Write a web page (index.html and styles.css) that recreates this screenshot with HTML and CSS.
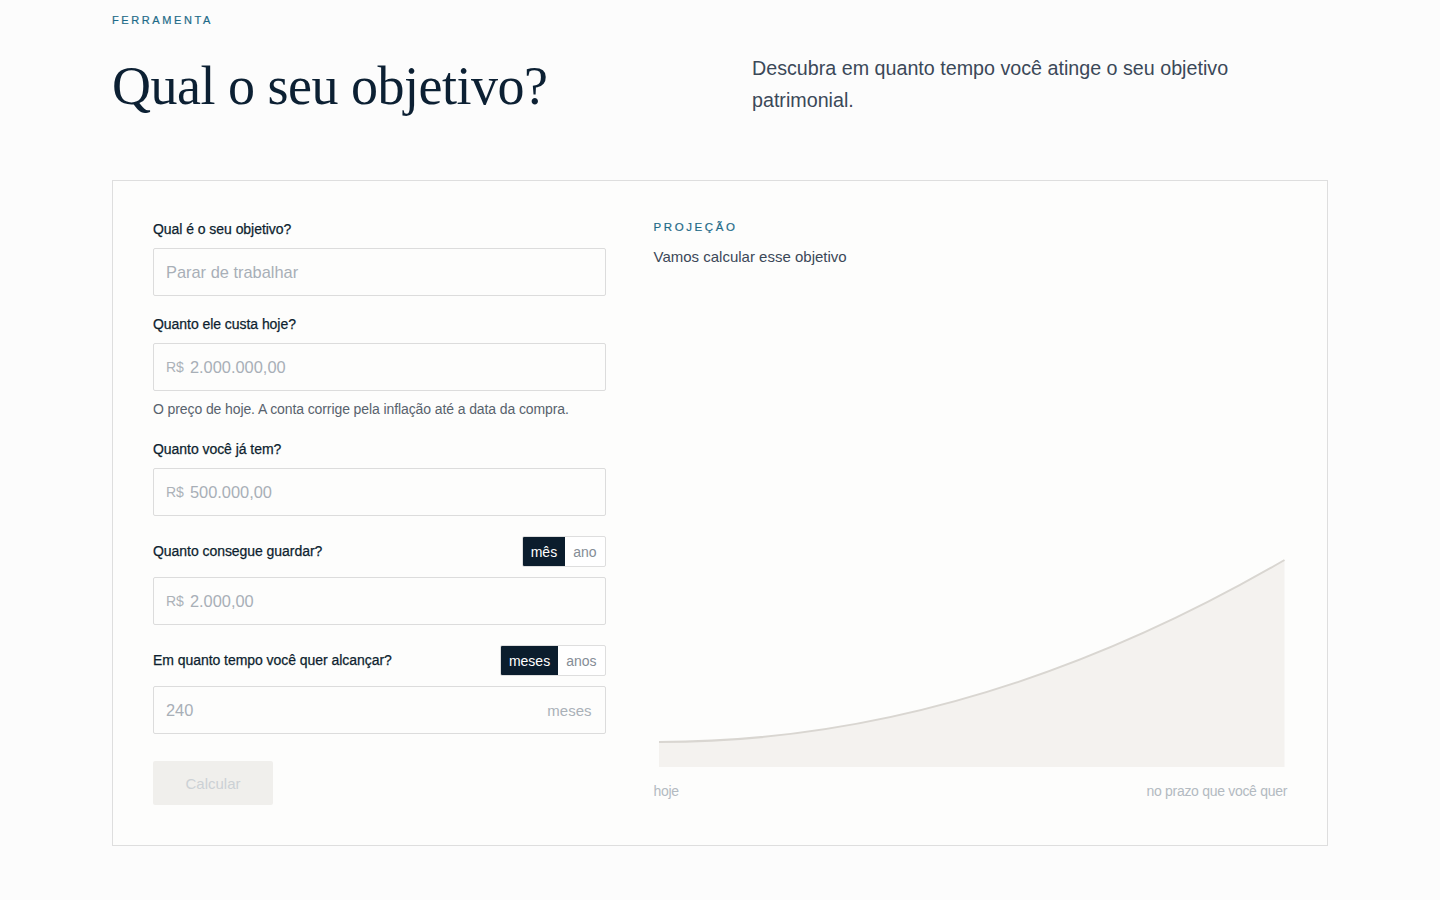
FILE: index.html
```html
<!DOCTYPE html>
<html lang="pt-BR">
<head>
<meta charset="utf-8">
<title>Qual o seu objetivo?</title>
<link rel="stylesheet" href="styles.css">
</head>
<body>
<main class="page">
  <header class="hero">
    <div class="hero-left">
      <div class="eyebrow">FERRAMENTA</div>
      <h1 class="title">Qual o seu objetivo?</h1>
    </div>
    <p class="lead">Descubra em quanto tempo você atinge o seu objetivo patrimonial.</p>
  </header>

  <section class="card">
    <form class="form">
      <div class="field">
        <div class="field-head"><label class="label">Qual é o seu objetivo?</label></div>
        <div class="input"><input class="control" type="text" placeholder="Parar de trabalhar"></div>
      </div>

      <div class="field">
        <div class="field-head"><label class="label">Quanto ele custa hoje?</label></div>
        <div class="input"><span class="prefix">R$</span><input class="control" type="text" placeholder="2.000.000,00"></div>
        <p class="help">O preço de hoje. A conta corrige pela inflação até a data da compra.</p>
      </div>

      <div class="field">
        <div class="field-head"><label class="label">Quanto você já tem?</label></div>
        <div class="input"><span class="prefix">R$</span><input class="control" type="text" placeholder="500.000,00"></div>
      </div>

      <div class="field">
        <div class="field-head toggle-head">
          <label class="label">Quanto consegue guardar?</label>
          <div class="toggle"><span class="seg active">mês</span><span class="seg">ano</span></div>
        </div>
        <div class="input"><span class="prefix">R$</span><input class="control" type="text" placeholder="2.000,00"></div>
      </div>

      <div class="field">
        <div class="field-head toggle-head">
          <label class="label">Em quanto tempo você quer alcançar?</label>
          <div class="toggle"><span class="seg active">meses</span><span class="seg">anos</span></div>
        </div>
        <div class="input"><input class="control" type="text" placeholder="240"><span class="suffix">meses</span></div>
      </div>

      <button class="btn" type="button">Calcular</button>
    </form>

    <div class="projection">
      <div class="eyebrow eyebrow-sm">PROJEÇÃO</div>
      <p class="proj-text">Vamos calcular esse objetivo</p>
      <div class="chart">
        <svg class="chart-svg" viewBox="0 0 634 212" preserveAspectRatio="none" aria-hidden="true">
          <path d="M5,184 Q318,184 631,2 L631,209 L5,209 Z" fill="#f4f2ef"/>
          <path d="M5,184 Q318,184 631,2" fill="none" stroke="#d9d6d1" stroke-width="2"/>
        </svg>
        <div class="chart-labels"><span>hoje</span><span>no prazo que você quer</span></div>
      </div>
    </div>
  </section>
</main>
</body>
</html>
```

FILE: styles.css
```css
* { box-sizing: border-box; }

html, body {
  margin: 0;
  padding: 0;
  background: #fcfcfc;
}

body {
  font-family: "Liberation Sans", Arial, sans-serif;
  color: #0d1f2f;
}

.page {
  width: 1216px;
  margin: 0 auto;
  padding-top: 14px;
  padding-bottom: 54px;
}

.hero {
  display: grid;
  grid-template-columns: 1fr 1fr;
  column-gap: 64px;
  align-items: end;
}

.eyebrow {
  font-size: 11px;
  line-height: 13px;
  letter-spacing: 2.6px;
  color: #1d6a88;
  -webkit-text-stroke: 0.2px #1d6a88;
}

.title {
  margin: 26px 0 0;
  font-family: "Liberation Serif", "Times New Roman", serif;
  font-weight: 400;
  font-size: 54px;
  line-height: 66px;
  letter-spacing: -0.5px;
  color: #0c2033;
}

.lead {
  margin: 0 0 3px;
  font-size: 19.7px;
  line-height: 32px;
  color: #3b4858;
  max-width: 520px;
}

.card {
  margin-top: 61px;
  border: 1px solid #dedede;
  background: #fdfdfc;
  padding: 40px;
  display: grid;
  grid-template-columns: 5fr 7fr;
  column-gap: 48px;
}

.form {
  display: flex;
  flex-direction: column;
  gap: 20px;
}

.field-head {
  display: flex;
  align-items: center;
  justify-content: space-between;
  margin-bottom: 10px;
}

.label {
  font-size: 14px;
  line-height: 17px;
  color: #0d1f2f;
  letter-spacing: -0.05px;
  -webkit-text-stroke: 0.25px #0d1f2f;
}

.toggle {
  display: flex;
  height: 31px;
  border: 1px solid #dedede;
  border-radius: 2px;
  overflow: hidden;
  background: #fff;
}

.seg {
  display: flex;
  align-items: center;
  padding: 0 8px;
  font-size: 14px;
  color: #858d96;
}

.seg.active {
  background: #0b1d2d;
  color: #ffffff;
}

.input {
  display: flex;
  align-items: center;
  height: 48px;
  border: 1px solid #dcdcdc;
  border-radius: 2px;
  background: #fdfdfc;
  padding: 0 13px 0 12px;
}

.prefix {
  font-size: 14px;
  color: #acb2b8;
  margin-right: 6px;
}

.suffix {
  font-size: 15px;
  color: #aab1b8;
}

.control {
  flex: 1;
  min-width: 0;
  border: 0;
  outline: 0;
  background: transparent;
  font-family: inherit;
  font-size: 16.4px;
  color: #0d1f2f;
  padding: 0;
}

.control::placeholder {
  color: #a8afb7;
  opacity: 1;
}

.help {
  margin: 9px 0 3px;
  font-size: 14px;
  line-height: 18px;
  color: #58626d;
  letter-spacing: -0.1px;
}

.btn {
  align-self: flex-start;
  margin-top: 7px;
  width: 120px;
  height: 44px;
  border: 0;
  border-radius: 2px;
  background: #f0efec;
  font-family: inherit;
  font-size: 15px;
  color: #ccd1d5;
}

.projection {
  display: flex;
  flex-direction: column;
}

.eyebrow-sm {
  font-size: 11.5px;
  line-height: 14px;
  letter-spacing: 2.6px;
  margin-top: -1px;
}

.proj-text {
  margin: 14px 0 0;
  font-size: 15px;
  line-height: 18px;
  color: #3b4858;
}

.chart {
  margin-top: auto;
  padding-bottom: 6px;
}

.chart-svg {
  display: block;
  width: 100%;
  height: 212px;
}

.chart-labels {
  display: flex;
  justify-content: space-between;
  margin-top: 13px;
  font-size: 14px;
  line-height: 16px;
  color: #b3bac1;
  letter-spacing: -0.3px;
}
```
